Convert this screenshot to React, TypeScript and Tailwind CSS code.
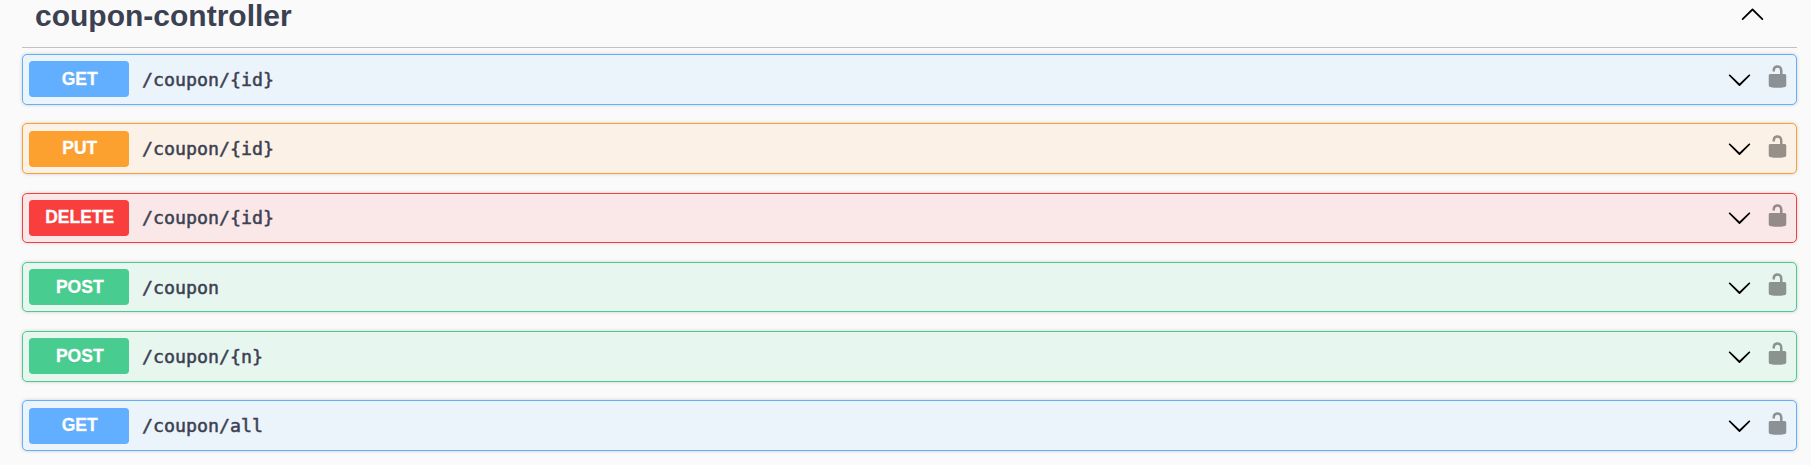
type Method = "GET" | "PUT" | "DELETE" | "POST";

const operations: { method: Method; path: string }[] = [
  { method: "GET", path: "/coupon/{id}" },
  { method: "PUT", path: "/coupon/{id}" },
  { method: "DELETE", path: "/coupon/{id}" },
  { method: "POST", path: "/coupon" },
  { method: "POST", path: "/coupon/{n}" },
  { method: "GET", path: "/coupon/all" },
];

const styles: Record<Method, { row: string; badge: string }> = {
  GET: { row: "border-[#61affe] bg-[#ebf3fb]", badge: "bg-[#61affe]" },
  PUT: { row: "border-[#fca130] bg-[#fbf1e6]", badge: "bg-[#fca130]" },
  DELETE: { row: "border-[#f93e3e] bg-[#fae7e7]", badge: "bg-[#f93e3e]" },
  POST: { row: "border-[#49cc90] bg-[#e8f6f0]", badge: "bg-[#49cc90]" },
};

function ArrowUp() {
  return (
    <svg viewBox="0 0 20 20" className="size-[25px]" aria-hidden="true">
      <path d="M17.418 14.908C17.69 15.176 18.127 15.176 18.397 14.908C18.667 14.64 18.668 14.207 18.397 13.939L10.489 6.109C10.219 5.841 9.782 5.841 9.51 6.109L1.602 13.939C1.332 14.207 1.332 14.64 1.602 14.908C1.873 15.176 2.311 15.176 2.581 14.908L10 7.767L17.418 14.908Z" />
    </svg>
  );
}

function ArrowDown() {
  return (
    <svg viewBox="0 0 20 20" className="size-[25px]" aria-hidden="true">
      <path d="M17.418 6.109c.272-.268.709-.268.979 0s.271.701 0 .969l-7.908 7.83c-.27.268-.707.268-.979 0l-7.908-7.83c-.27-.268-.27-.701 0-.969.271-.268.709-.268.979 0L10 13.25l7.418-7.141z" />
    </svg>
  );
}

function Unlocked() {
  return (
    <svg viewBox="0 0 20 20" className="size-[25px] opacity-40" aria-hidden="true">
      <path d="M15.8 8H14V5.6C14 2.703 12.665 1 10 1 7.334 1 6 2.703 6 5.6V6h2v-.801C8 3.754 8.797 3 10 3c1.203 0 2 .754 2 2.199V8H4c-.553 0-1 .646-1 1.199V17c0 .549.428 1.139.951 1.307l1.197.387C5.672 18.861 6.55 19 7.1 19h5.8c.549 0 1.428-.139 1.951-.307l1.196-.387c.524-.167.953-.757.953-1.306V9.199C17 8.646 16.352 8 15.8 8z" />
    </svg>
  );
}

function Operation({ method, path }: { method: Method; path: string }) {
  const s = styles[method];
  return (
    <div
      className={`flex h-[50.5px] items-center rounded-[5px] border px-[6.25px] shadow-[0_0_3.75px_rgba(0,0,0,0.19)] ${s.row}`}
    >
      <span
        className={`flex h-9 w-[100px] items-center justify-center rounded-[3.75px] pb-px pl-px text-[17.5px] leading-5 font-bold text-white [text-shadow:0_1px_0_rgba(0,0,0,0.1)] [-webkit-text-stroke:0.3px_#ffffff] ${s.badge}`}
      >
        {method}
      </span>
      <span className="grow pt-px pl-[12.75px] font-['DejaVu_Sans_Mono',monospace] text-[18.27px] leading-6 text-[#3b4151] [-webkit-text-stroke:0.5px_#3b4151]">
        {path}
      </span>
      <ArrowDown />
      <span className="mr-[-0.5px] mb-[5px] ml-[13px]">
        <Unlocked />
      </span>
    </div>
  );
}

export default function App() {
  return (
    <main className="h-[465px] overflow-hidden bg-[#fafafa] pr-3.5 pl-[22px] font-['Liberation_Sans',Arial,sans-serif]">
      <header className="flex h-12 items-start justify-between border-b border-[#3b4151]/30 pr-8 pl-[13px]">
        <h3 className="-mt-0.5 text-[30px] leading-9 font-bold text-[#3b4151]">coupon-controller</h3>
        <span className="pt-px">
          <ArrowUp />
        </span>
      </header>
      <div className="mt-1.5 flex flex-col gap-[18.75px]">
        {operations.map((op) => (
          <Operation key={op.method + op.path} {...op} />
        ))}
      </div>
    </main>
  );
}
